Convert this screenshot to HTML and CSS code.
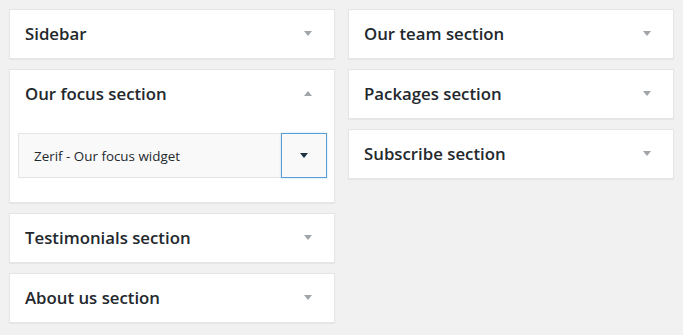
FILE: index.html
```html
<!DOCTYPE html>
<html lang="en">
<head>
    <meta charset="UTF-8">
    <title>Widget sections</title>
    <link rel="stylesheet" href="styles.css">
</head>
<body>
    <div class="columns">
        <!-- left column -->
        <div class="column">
            <div class="section">
                <h3 class="section-title">Sidebar <span class="arrow"></span></h3>
            </div>
            <div class="section open">
                <h3 class="section-title">Our focus section <span class="arrow up"></span></h3>
                <div class="section-body">
                    <div class="widget">
                        <span class="widget-name">Zerif - Our focus widget</span>
                        <button class="widget-toggle"><span class="arrow dark"></span></button>
                    </div>
                </div>
            </div>
            <div class="section">
                <h3 class="section-title">Testimonials section <span class="arrow"></span></h3>
            </div>
            <div class="section">
                <h3 class="section-title">About us section <span class="arrow"></span></h3>
            </div>
        </div>

        <!-- right column -->
        <div class="column">
            <div class="section">
                <h3 class="section-title">Our team section <span class="arrow"></span></h3>
            </div>
            <div class="section">
                <h3 class="section-title">Packages section <span class="arrow"></span></h3>
            </div>
            <div class="section">
                <h3 class="section-title">Subscribe section <span class="arrow"></span></h3>
            </div>
        </div>
    </div>
</body>
</html>
```

FILE: styles.css
```css
* { box-sizing: border-box; }
body {
    margin: 0;
    padding: 9px;
    background: #f1f1f1;
    font-family: "Open Sans", "Noto Sans", sans-serif;
    color: #23282d;
}

.columns {
    display: grid;
    grid-template-columns: 326px 326px;
    column-gap: 13px;
    align-items: start;
}
.column {
    display: flex;
    flex-direction: column;
    gap: 10px;
}

/* section cards */
.section {
    background: #fff;
    border: 1px solid #e5e5e5;
    box-shadow: 0 1px 1px rgba(0,0,0,0.04);
}
.section-title {
    margin: 0;
    height: 48px;
    padding: 0 22px 2px 15px;
    display: flex;
    align-items: center;
    justify-content: space-between;
    font-size: 16.8px;
    font-weight: 600;
    color: #23282d;
}

/* little triangles */
.arrow {
    width: 0;
    height: 0;
    border-left: 4px solid transparent;
    border-right: 4px solid transparent;
    border-top: 5px solid #a0a5aa;
}
.arrow.up {
    border-top: none;
    border-bottom: 5px solid #a0a5aa;
}
.arrow.dark { border-top-color: #1d3345; }

/* expanded body */
.section-body {
    padding: 15px 7px 24px 8px;
}
.widget {
    display: flex;
    height: 45px;
    background: #f9f9f9;
    border: 1px solid #e5e5e5;
}
.widget-name {
    flex: 1;
    display: flex;
    align-items: center;
    padding-left: 15px;
    font-size: 13.4px;
    color: #23282d;
}
.widget-toggle {
    width: 46px;
    margin: -1px -1px -1px 0;
    background: #f9f9f9;
    border: 1px solid #5b9dd9;
    box-shadow: 0 0 2px rgba(30,140,190,0.3);
    display: flex;
    align-items: center;
    justify-content: center;
    padding: 0;
}
```
